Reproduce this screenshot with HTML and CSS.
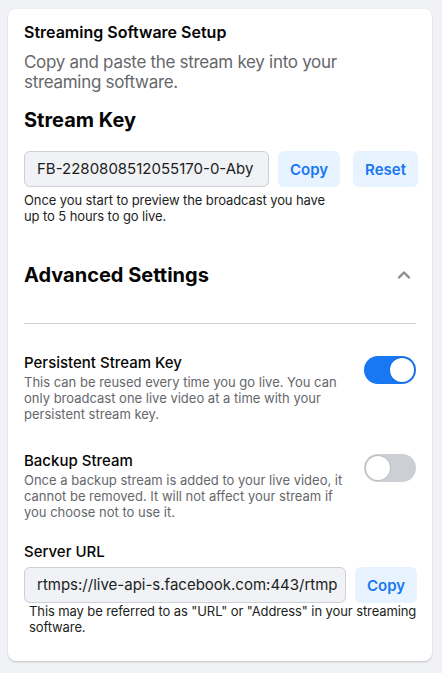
FILE: index.html
```html
<!DOCTYPE html>
<html>
<head>
<meta charset="utf-8">
<link rel="stylesheet" href="styles.css">
</head>
<body>
<div class="card">
  <div class="title">Streaming Software Setup</div>
  <div class="subtitle">Copy and paste the stream key into your streaming software.</div>
  <div class="h2 key-h">Stream Key</div>
  <div class="field-row">
    <div class="input key-input">FB-2280808512055170-0-Aby</div>
    <button class="btn">Copy</button>
    <button class="btn reset">Reset</button>
  </div>
  <div class="help narrow">Once you start to preview the broadcast you have up to 5 hours to go live.</div>
  <div class="adv-row">
    <div class="h2">Advanced Settings</div>
    <svg class="chev" width="14" height="10" viewBox="0 0 14 10"><path d="M2 7.5 L7 2.5 L12 7.5" fill="none" stroke="#8a8d91" stroke-width="2.4" stroke-linecap="round" stroke-linejoin="round"/></svg>
  </div>
  <div class="divider"></div>
  <div class="setting">
    <div class="setting-text">
      <div class="setting-title">Persistent Stream Key</div>
      <div class="setting-desc">This can be reused every time you go live. You can only broadcast one live video at a time with your persistent stream key.</div>
    </div>
    <div class="toggle on"><div class="knob"></div></div>
  </div>
  <div class="setting second">
    <div class="setting-text">
      <div class="setting-title">Backup Stream</div>
      <div class="setting-desc">Once a backup stream is added to your live video, it cannot be removed. It will not affect your stream if you choose not to use it.</div>
    </div>
    <div class="toggle"><div class="knob"></div></div>
  </div>
  <div class="setting-title url-title">Server URL</div>
  <div class="field-row url-row">
    <div class="input url-input">rtmps://live-api-s.facebook.com:443/rtmp</div>
    <button class="btn">Copy</button>
  </div>
  <div class="help url-help">This may be referred to as "URL" or "Address" in your streaming software.</div>
</div>
</body>
</html>
```
FILE: styles.css
```css
* { box-sizing: border-box; }
body {
  margin: 0;
  background: #f0f2f5;
  font-family: Inter, "Liberation Sans", Arial, sans-serif;
  color: #050505;
  padding: 9px 10px 12px 8px;
}
.card {
  background: #fff;
  border-radius: 8px;
  box-shadow: 0 1px 2px rgba(0,0,0,0.2);
  padding: 13px 16px 26px 16px;
  width: 424px;
}
.title {
  font-size: 16px;
  font-weight: 600;
  line-height: 20px;
}
.subtitle {
  margin-top: 10px;
  font-size: 17px;
  line-height: 20px;
  color: #65676b;
  width: 340px;
  letter-spacing: -0.3px;
}
.h2 {
  font-size: 20px;
  font-weight: 700;
  line-height: 24px;
}
.key-h { margin-top: 16px; }
.field-row {
  display: flex;
  gap: 9px;
  margin-top: 19px;
  height: 36px;
}
.input {
  flex: 0 0 auto;
  background: #f0f2f5;
  border: 1px solid #ccd0d5;
  border-radius: 6px;
  font-size: 15px;
  line-height: 34px;
  padding-left: 12px;
  white-space: nowrap;
  overflow: hidden;
  color: #1c1e21;
}
.key-input { width: 245px; }
.url-input { width: 322px; }
.btn {
  border: none;
  background: #e7f3ff;
  color: #1877f2;
  font-family: inherit;
  font-size: 15px;
  font-weight: 600;
  border-radius: 6px;
  padding: 0 12px;
  height: 36px;
  cursor: pointer;
}
.reset { margin-left: 4px; width: 65px; }
.help {
  font-size: 13px;
  line-height: 16px;
  margin-top: 5px;
  color: #1c1e21;
  letter-spacing: -0.1px;
}
.narrow { width: 312px; }
.adv-row {
  margin-top: 39px;
  display: flex;
  justify-content: space-between;
  align-items: center;
}
.chev { margin-right: 5px; }
.divider {
  height: 1px;
  background: #ced0d4;
  margin-top: 36px;
}
.setting {
  display: flex;
  justify-content: space-between;
  align-items: flex-start;
  margin-top: 29px;
}
.setting.second { margin-top: 29px; }
.setting-text { width: 326px; }
.setting-title {
  font-size: 15px;
  font-weight: 500;
  line-height: 20px;
}
.setting-desc {
  font-size: 13px;
  line-height: 16px;
  color: #65676b;
  margin-top: 1px;
}
.toggle {
  width: 52px;
  height: 28px;
  border-radius: 14px;
  background: #ccd0d5;
  position: relative;
  margin-top: 3px;
}
.toggle.on { background: #1877f2; }
.knob {
  position: absolute;
  top: 2px;
  left: 2px;
  width: 24px;
  height: 24px;
  border-radius: 50%;
  background: #fff;
  box-shadow: 0 0 0 1px rgba(0,0,0,0.08);
}
.toggle.on .knob { left: 26px; }
.url-title { margin-top: 22px; }
.url-row { margin-top: 5px; }
.url-help { margin-left: 5px; margin-right: -10px; margin-top: 0; }
```
